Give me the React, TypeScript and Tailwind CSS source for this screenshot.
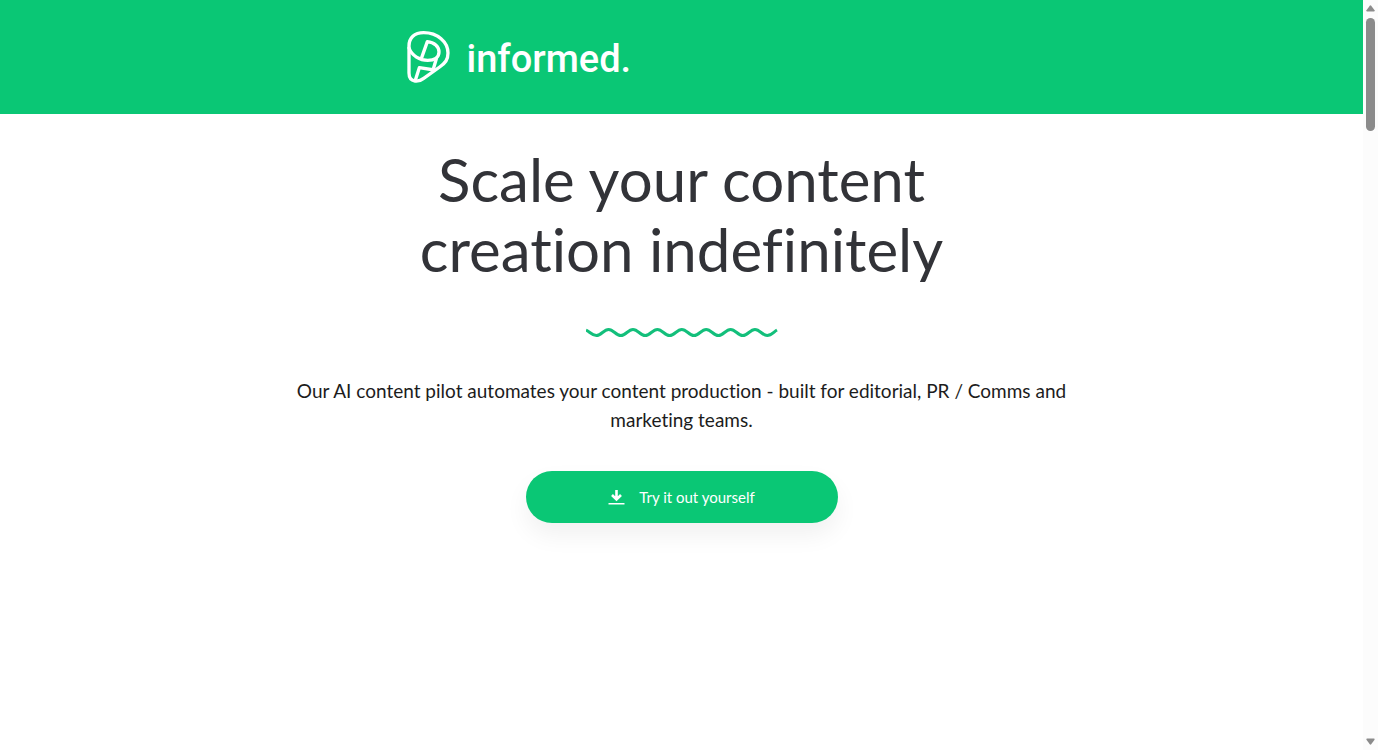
function LogoMark() {
  return (
    <svg
      viewBox="30 30 138 162"
      className="w-[46px] h-[54px]"
      fill="none"
      stroke="currentColor"
      strokeWidth="10"
      strokeLinejoin="round"
      strokeLinecap="round"
      aria-hidden="true"
    >
      <path d="M42 78C42 54 58 38 86 38C128 38 159 66 159 99C159 119 151 129 134 141L86 175C76 183 68 184 60 183C47 181 42 173 42 159Z" />
      <path d="M42 84C50 107 75 121 98 121C119 121 132 111 132 96C132 80 118 67 97 65L80 113" />
      <path d="M124 116L115 147" />
      <path d="M61 181L73 143L118 150" />
    </svg>
  );
}

function Wave() {
  return (
    <svg
      viewBox="0 0 192 12"
      className="w-48 h-3"
      fill="none"
      stroke="#13bf7b"
      strokeWidth="3"
      aria-hidden="true"
    >
      <path d="M0 4C4 6 6 9.500 10.400 9.500C15.500 9.500 17.500 3.500 22.600 3.500S29.700 9.500 34.800 9.500S41.900 3.500 47 3.500S54.100 9.500 59.200 9.500S66.300 3.500 71.400 3.500S78.500 9.500 83.600 9.500S90.700 3.500 95.800 3.500S102.900 9.500 108 9.500S115.100 3.500 120.200 3.500S127.300 9.500 132.400 9.500S139.500 3.500 144.600 3.500S151.700 9.500 156.800 9.500S163.900 3.500 169 3.500S176.100 9.500 181.200 9.500C185.500 9.500 187.500 6 191 4" />
    </svg>
  );
}

function DownloadIcon() {
  return (
    <svg viewBox="0 0 17 17" className="w-[17px] h-[17px]" aria-hidden="true">
      <path
        d="M8.500 1V10M4 6L8.500 10.500L13 6"
        fill="none"
        stroke="currentColor"
        strokeWidth="2.600"
      />
      <path d="M0.500 14H16.500V15.500H0.500Z" fill="currentColor" />
    </svg>
  );
}

function ScrollRail() {
  return (
    <div
      className="w-[15px] shrink-0 bg-[#fcfcfc] text-[#8b8b8b] flex flex-col items-center justify-between py-1"
      aria-hidden="true"
    >
      <div className="flex flex-col items-center gap-[6px]">
        <svg viewBox="0 0 10 8" className="w-[9px] h-2" fill="currentColor">
          <path d="M4.200 1.500Q5 0.500 5.800 1.500L9.500 6.500Q10 8 8.500 8H1.500Q0 8 0.500 6.500Z" />
        </svg>
        <div className="w-[9px] h-[113px] rounded-full bg-[#8b8b8b]" />
      </div>
      <svg viewBox="0 0 10 8" className="w-[9px] h-2" fill="currentColor">
        <path d="M4.200 6.500Q5 7.500 5.800 6.500L9.500 1.500Q10 0 8.500 0H1.500Q0 0 0.500 1.500Z" />
      </svg>
    </div>
  );
}

export default function App() {
  return (
    <div className="min-h-screen flex bg-white font-['Lato',sans-serif] [font-variant-ligatures:none]">
      <div className="flex-1 min-w-0">
        <header className="bg-[#0ac775] text-white py-[30px]">
          <div className="max-w-[554px] mx-auto">
            <a href="#" className="flex w-fit items-center gap-4">
              <LogoMark />
              <span className="pt-1 font-['Roboto',sans-serif] text-[38px] leading-[50px] font-medium">
                informed.
              </span>
            </a>
          </div>
        </header>

        <main className="flex flex-col items-center px-4 pt-[30px] text-center">
          <h1 className="max-w-[600px] text-[60px] leading-[70px] text-[#323338]">
            Scale your content creation indefinitely
          </h1>
          <div className="pt-[42px] pb-[38px]">
            <Wave />
          </div>
          <p className="max-w-[800px] text-[19px] leading-[29px] text-[#1c1c1c]">
            Our AI content pilot automates your content production - built for
            editorial, PR / Comms and marketing teams.
          </p>
          <button
            type="button"
            className="mt-[37px] flex h-[52px] w-full max-w-[312px] items-center justify-center gap-[14px] rounded-full bg-[#0ac775] text-white text-[15px] shadow-[0_12px_24px_rgba(0,0,0,0.06)]"
          >
            <DownloadIcon />
            Try it out yourself
          </button>
        </main>
      </div>
      <ScrollRail />
    </div>
  );
}
